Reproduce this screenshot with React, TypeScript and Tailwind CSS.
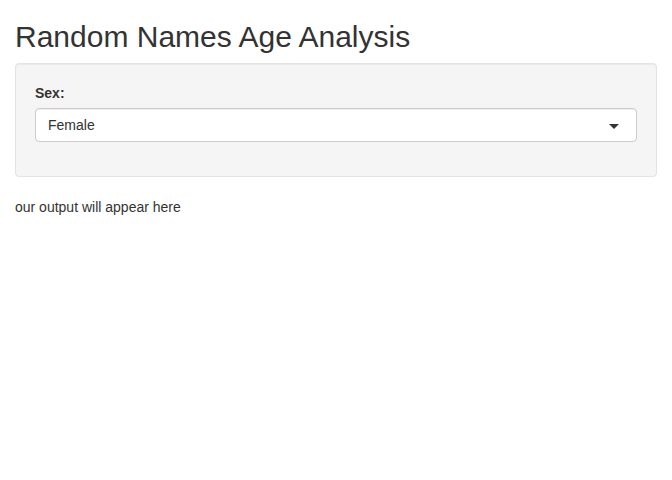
export default function App() {
  return (
    <div className="min-h-[480px] bg-white px-[15px] text-[14px] leading-[20px] text-[#333]" style={{ fontFamily: '"Liberation Sans", Arial, sans-serif' }}>
      <h2 className="mt-[20px] mb-[10px] text-[30px] leading-[33px] font-normal">Random Names Age Analysis</h2>
      <div className="mb-[20px] rounded-[4px] border border-[#e3e3e3] bg-[#f5f5f5] p-[19px] shadow-[inset_0_1px_1px_rgba(0,0,0,0.05)]">
        <div className="mb-[15px]">
          <label className="mb-[5px] block font-bold">Sex:</label>
          <div className="relative flex h-[34px] items-center rounded-[4px] border border-[#cccccc] bg-white px-[12px] shadow-[inset_0_1px_1px_rgba(0,0,0,0.075)]">
            <span>Female</span>
            <span className="absolute right-[17px] top-[15px] h-0 w-0 border-x-[5px] border-t-[5px] border-x-transparent border-t-[#333]" />
          </div>
        </div>
      </div>
      <div>our output will appear here</div>
    </div>
  );
}
